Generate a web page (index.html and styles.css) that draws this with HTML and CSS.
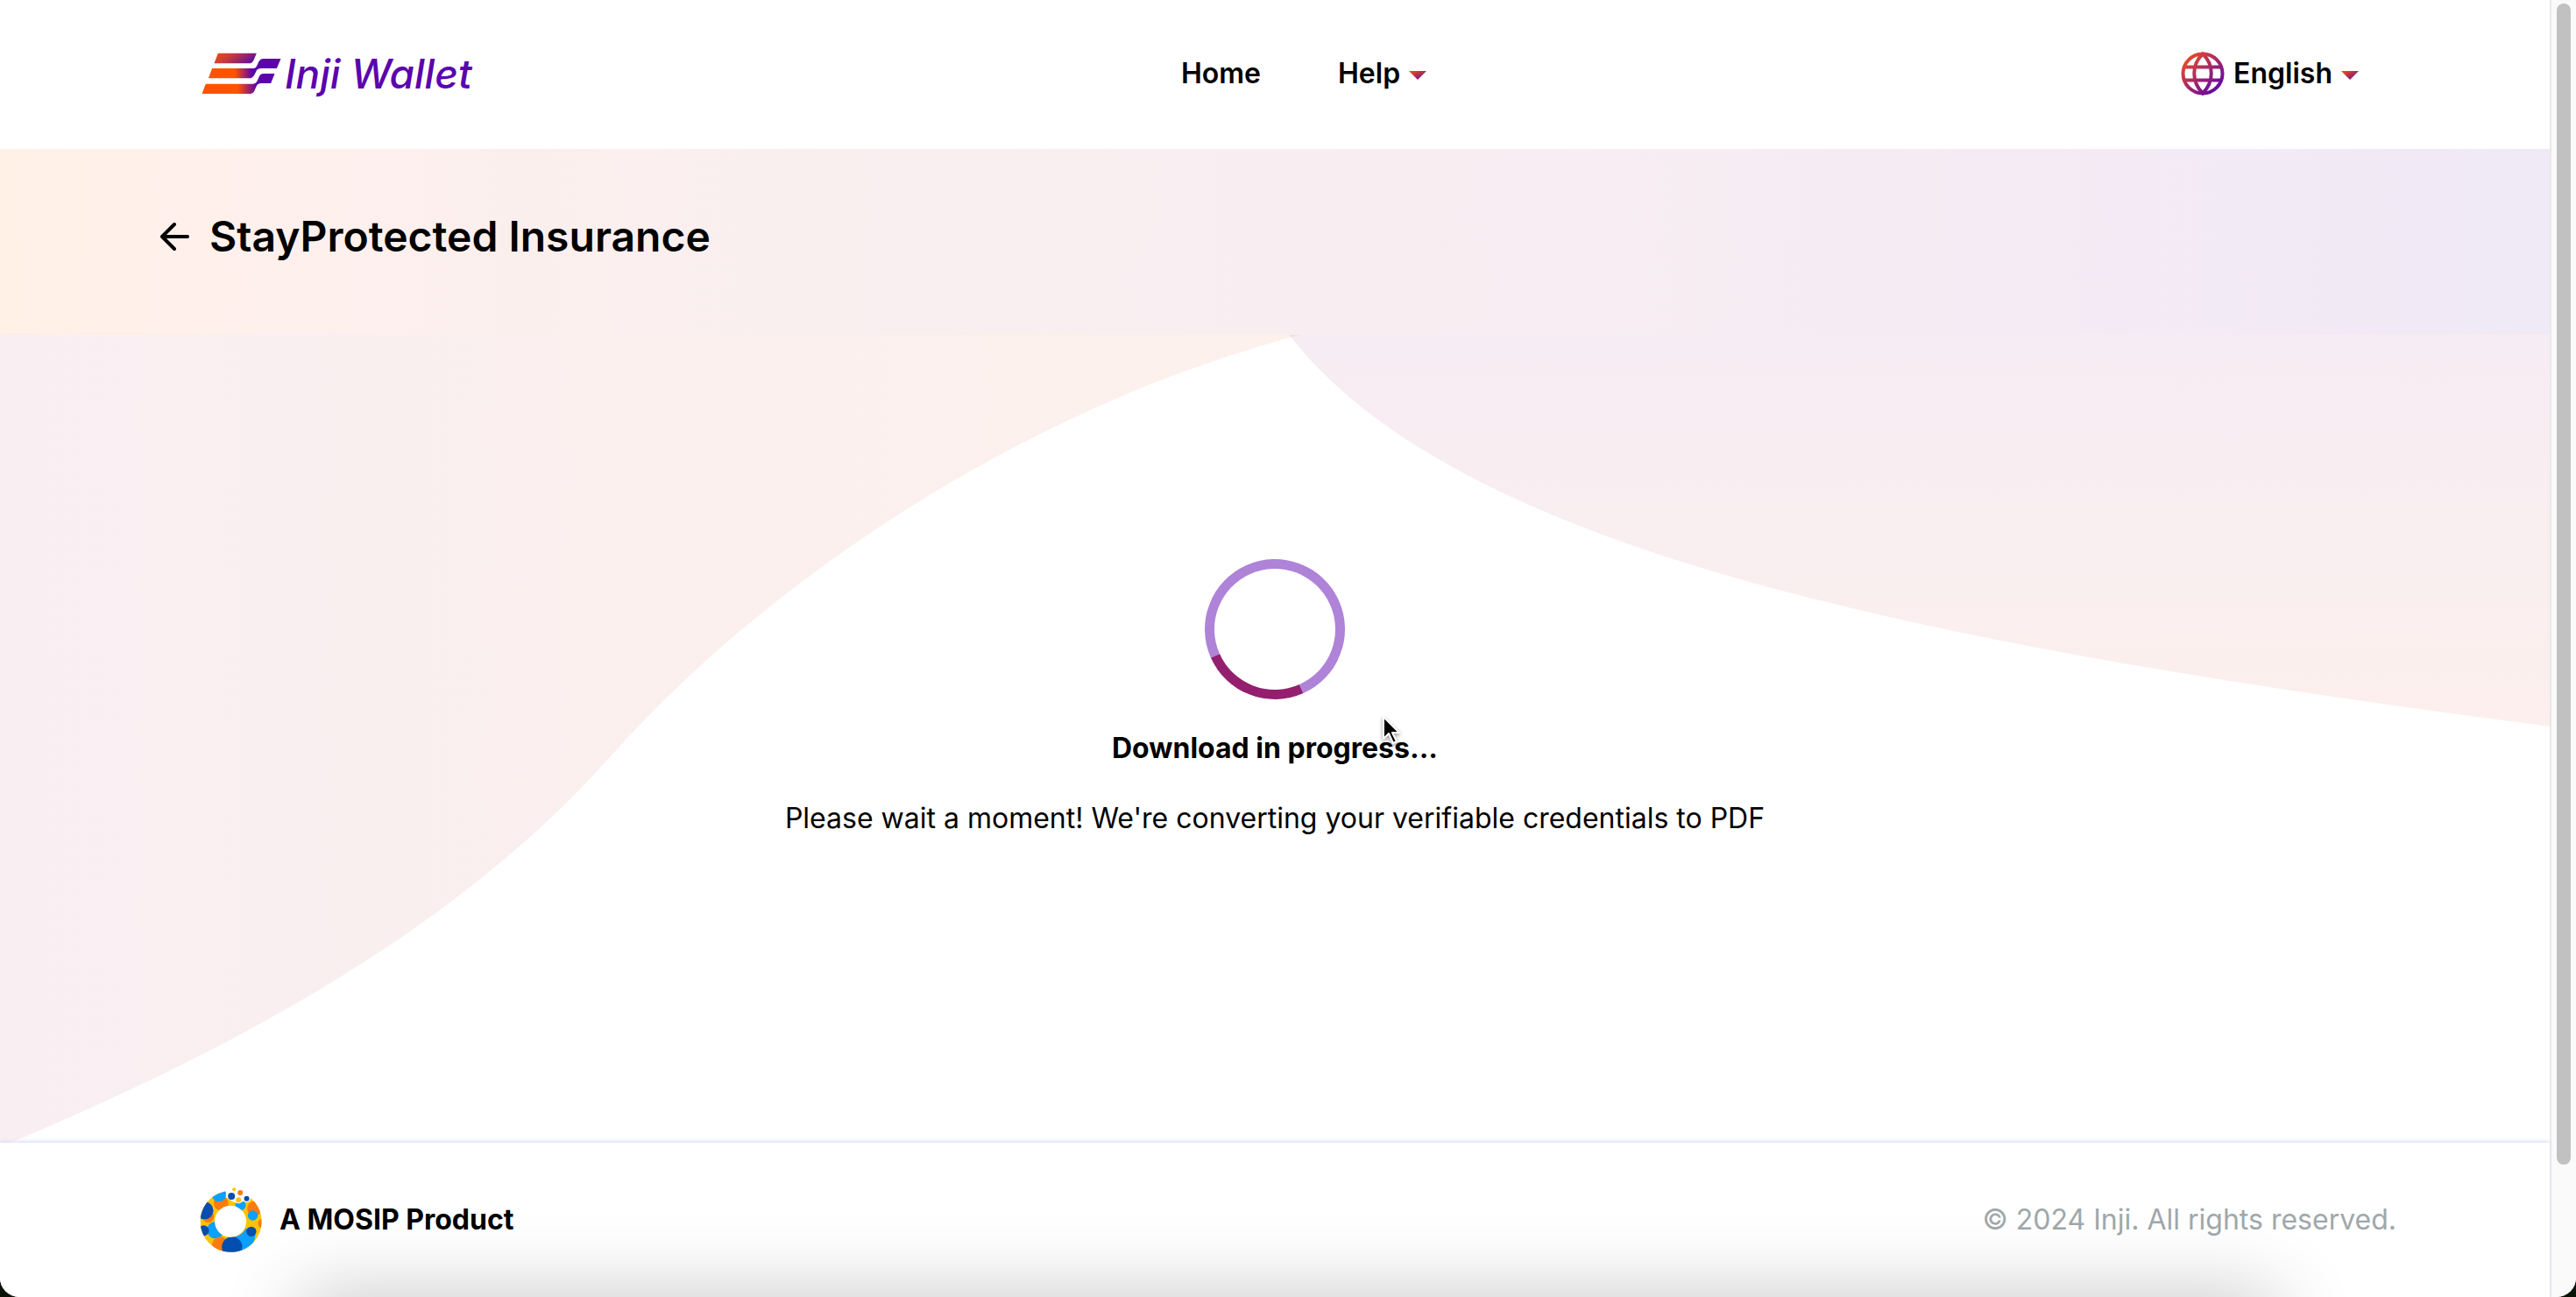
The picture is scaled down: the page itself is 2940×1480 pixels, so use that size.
FILE: index.html
```html
<!DOCTYPE html>
<html lang="en">
<head>
<meta charset="utf-8">
<meta name="viewport" content="width=device-width, initial-scale=1">
<title>Inji Wallet</title>
<link rel="stylesheet" href="styles.css">
</head>
<body>
<div class="window">
  <div class="page">
    <header class="header">
      <a class="brand" href="#">
        <svg class="brand-mark" viewBox="92 60 272 144" aria-hidden="true">
          <defs>
            <linearGradient id="bar-top" x1="0" y1="0" x2="1" y2="0.3"><stop offset="0" stop-color="#f04d16"/><stop offset="0.45" stop-color="#c43a3c"/><stop offset="1" stop-color="#6a1296"/></linearGradient>
            <linearGradient id="bar-mid" gradientUnits="userSpaceOnUse" x1="205" y1="0" x2="265" y2="0"><stop offset="0" stop-color="#ff5300"/><stop offset="1" stop-color="#5b03ad"/></linearGradient>
            <linearGradient id="bar-low" gradientUnits="userSpaceOnUse" x1="215" y1="0" x2="280" y2="0"><stop offset="0" stop-color="#ff5300"/><stop offset="1" stop-color="#5b03ad"/></linearGradient>
          </defs>
          <path fill="url(#bar-top)" d="M148 62H280L270 86Q265 97 253 97H135Z"/>
          <path fill="url(#bar-mid)" d="M128 114H270Q276 114 280 107L288 90Q293 81 302 81H363L349 114H296Q286 114 281 119L272 137Q266 148 253 148H115Z"/>
          <path fill="url(#bar-low)" d="M106 167H268Q276 167 281 160L289 142Q294 132 304 132H342L329 165H296Q286 165 281 172L272 192Q268 201 260 201H93Z"/>
        </svg>
        <span class="brand-name">Inji Wallet</span>
      </a>
      <nav class="nav">
        <a class="nav-link" href="#">Home</a>
        <button class="menu-button" type="button">Help
          <svg class="caret" viewBox="0 0 20 10" aria-hidden="true"><defs><linearGradient id="brand-fade" x1="0" y1="0" x2="1" y2="1"><stop offset="0" stop-color="#ff5300"/><stop offset="1" stop-color="#5b03ad"/></linearGradient></defs><path fill="url(#brand-fade)" d="M0 0H20L10 10Z"/></svg>
        </button>
      </nav>
      <button class="menu-button language" type="button">
        <svg class="globe" viewBox="0 0 50 50" aria-hidden="true"><g fill="none" stroke="url(#globe-fade)" stroke-width="4"><circle cx="25" cy="25" r="22.5"/><path d="M25 2.5C12 15 12 34 25 47.5C38 34 38 15 25 2.5ZM4 17.5H46M4 32.5H46"/></g><defs><linearGradient id="globe-fade" gradientUnits="userSpaceOnUse" x1="4" y1="4" x2="44" y2="46"><stop offset="0" stop-color="#f34f1e"/><stop offset="1" stop-color="#5b03ad"/></linearGradient></defs></svg>
        <span>English</span>
        <svg class="caret" viewBox="0 0 20 10" aria-hidden="true"><path fill="url(#brand-fade)" d="M0 0H20L10 10Z"/></svg>
      </button>
    </header>

    <section class="banner">
      <button class="back" type="button" aria-label="Go back">
        <svg viewBox="0 0 34 34" aria-hidden="true"><path fill="none" stroke="#000" stroke-width="4" stroke-linecap="round" stroke-linejoin="round" d="M32 17H3M17 3L3 17L17 31"/></svg>
      </button>
      <h1 class="title">StayProtected Insurance</h1>
    </section>

    <main class="main">
      <svg class="waves" viewBox="0 382 2911 922" preserveAspectRatio="none" aria-hidden="true">
        <defs>
          <linearGradient id="wave-left" x1="0" y1="0" x2="1" y2="0"><stop offset="0" stop-color="#f9eef2"/><stop offset="0.3" stop-color="#faefef"/><stop offset="1" stop-color="#fdf1ec"/></linearGradient>
          <linearGradient id="wave-right" x1="0" y1="0" x2="0" y2="1"><stop offset="0" stop-color="#f6ecf3"/><stop offset="0.5" stop-color="#f9eef0"/><stop offset="1" stop-color="#fcefed"/></linearGradient>
        </defs>
        <path fill="url(#wave-left)" d="M0 382H1485C1150 470 860 680 700 860C545 1035 320 1175 12 1304H0Z"/>
        <path fill="url(#wave-right)" d="M1472 382C1670 640 2250 742 2911 829V382Z"/>
        <path fill="#f6dfe2" d="M1472 382H1485L1474 385Z"/>
      </svg>
      <div class="status" role="status">
        <div class="spinner"></div>
        <h2 class="status-title">Download in progress...</h2>
        <p class="status-text">Please wait a moment! We're converting your verifiable credentials to PDF</p>
      </div>
    </main>

    <footer class="footer">
      <div class="product">
        <svg class="product-mark" viewBox="84 75 212 222" aria-hidden="true">
          <defs><clipPath id="ring"><path clip-rule="evenodd" d="M173 88A105 105 0 1 0 263 116L246 104L236 122L216 128L196 124L173 108ZM189 137A54 54 0 1 1 188 137Z"/></clipPath></defs>
          <g clip-path="url(#ring)">
            <path fill="#ffc20a" d="M80 75H300V300H80Z"/>
            <circle cx="112" cy="175" r="20" fill="#ff7a0d"/><circle cx="100" cy="154" r="30" fill="#034eb0"/>
            <circle cx="156" cy="129" r="25" fill="#ff7a0d"/><circle cx="149" cy="99" r="25" fill="#0aa0ff"/>
            <circle cx="137" cy="221" r="29" fill="#0aa0ff"/><circle cx="97" cy="223" r="18" fill="#034eb0"/>
            <circle cx="153" cy="271" r="27" fill="#ff7a0d"/><path fill="#0aa0ff" d="M195 246Q225 242 242 215L274 235Q272 280 225 300Z"/>
            <circle cx="194" cy="279" r="35" fill="#034eb0"/><circle cx="260" cy="226" r="17" fill="#034eb0"/>
            <circle cx="271" cy="147" r="25" fill="#ff7a0d"/><circle cx="300" cy="198" r="17" fill="#ff7a0d"/>
            <circle cx="265" cy="171" r="17" fill="#0aa0ff"/><circle cx="223" cy="136" r="18" fill="#0aa0ff"/>
          </g>
          <circle cx="216" cy="118" r="12" fill="#fff"/><circle cx="216" cy="118" r="9" fill="#ffc20a"/>
          <circle cx="244" cy="113" r="13" fill="#fff"/><circle cx="244" cy="113" r="9" fill="#034eb0"/>
          <circle cx="192" cy="105" r="12" fill="#034eb0"/><circle cx="222" cy="93" r="9" fill="#ff7a0d"/><circle cx="201" cy="82" r="6" fill="#ffc20a"/>
        </svg>
        <span>A MOSIP Product</span>
      </div>
      <p class="copyright">© 2024 Inji. All rights reserved.</p>
    </footer>
  </div>
  <div class="scrollbar" aria-hidden="true"><div class="thumb"></div></div>
  <div class="dock-shadow"></div>
  <svg class="cursor" viewBox="0 0 24 34" aria-hidden="true"><path fill="#000" stroke="#fff" stroke-width="2" stroke-linejoin="round" d="M2 2V27L8 21L13 32L17 30L12 20H20Z"/></svg>
</div>
</body>
</html>
```
FILE: styles.css
```css
* { box-sizing: border-box; }

html { background: #0b1206; }

body {
  margin: 0;
  font-family: Inter, "Liberation Sans", sans-serif;
  font-size: 32px;
  line-height: 40px;
  color: #000;
}

button {
  border: 0;
  padding: 0;
  background: none;
  color: inherit;
  font: inherit;
}

a { color: inherit; text-decoration: none; }

h1, h2, p { margin: 0; }

svg { display: block; flex: none; }

.window {
  position: relative;
  display: flex;
  min-height: 100vh;
  overflow: hidden;
  background: #fff;
  border-radius: 0 0 22px 22px;
}

.page {
  flex: 1;
  display: flex;
  flex-direction: column;
}

.header {
  display: grid;
  grid-template-columns: 1fr auto 1fr;
  align-items: center;
  min-height: 170px;
  padding: 0 218px 2px 230px;
}

.brand {
  display: flex;
  align-items: center;
  gap: 4px;
  color: #5b03ad;
}

.brand-mark { width: 91px; height: 48px; }

.brand-name {
  font-size: 46px;
  font-style: italic;
  font-weight: 500;
  line-height: 48px;
}

.nav {
  display: flex;
  gap: 88px;
  padding-left: 54px;
  font-weight: 600;
}

.menu-button {
  display: flex;
  align-items: center;
  gap: 10px;
  font-weight: 600;
}

.caret { width: 20px; height: 10px; margin-top: 4px; }

.language { justify-self: end; }

.globe { width: 50px; height: 50px; }

.banner {
  display: flex;
  align-items: center;
  gap: 23px;
  min-height: 212px;
  padding: 0 182px 12px;
  background: linear-gradient(90deg, #fff1e6, #fff0eb 7%, #fbefee 20%, #f7edf2 62%, #f4ebf4 80%, #f0eaf7 100%);
}

.back svg { width: 34px; height: 34px; }

.title {
  font-size: 48px;
  font-weight: 600;
  line-height: 60px;
}

.main {
  position: relative;
  flex: 1;
  padding: 256px 32px 64px;
}

.waves {
  position: absolute;
  inset: 0;
  width: 100%;
  height: 100%;
}

.status {
  position: relative;
  display: flex;
  flex-direction: column;
  align-items: center;
  text-align: center;
}

.spinner {
  width: 160px;
  height: 160px;
  border: 11px solid #af83d8;
  border-bottom-color: #941f6f;
  border-radius: 50%;
  transform: rotate(21deg);
}

.status-title {
  margin-top: 36px;
  font-size: 32px;
  font-weight: 700;
}

.status-text { margin-top: 40px; }

.footer {
  position: relative;
  display: flex;
  align-items: center;
  justify-content: space-between;
  min-height: 176px;
  padding: 0 175px 0 228px;
  background: #fff;
  box-shadow: 0 -2px 4px #dde3f2;
}

.product {
  display: flex;
  align-items: center;
  gap: 20px;
  font-weight: 700;
}

.product-mark { width: 71px; height: 74px; }

.copyright { color: #9fa8ab; }

.scrollbar {
  flex: none;
  display: flex;
  width: 30px;
  padding: 4px 6px;
  background: #fafafa;
  border-left: 2px solid #e8e8e8;
}

.thumb {
  width: 16px;
  height: 90%;
  border-radius: 8px;
  background: #c1c1c1;
}

.dock-shadow {
  position: absolute;
  right: 12%;
  bottom: -70px;
  left: 12%;
  height: 60px;
  box-shadow: 0 0 90px 10px rgba(0, 0, 0, 0.24);
  pointer-events: none;
}

.cursor {
  position: absolute;
  top: 816px;
  left: 1577px;
  width: 24px;
  height: 34px;
  filter: drop-shadow(0 2px 2px rgba(0, 0, 0, 0.4));
}
```
